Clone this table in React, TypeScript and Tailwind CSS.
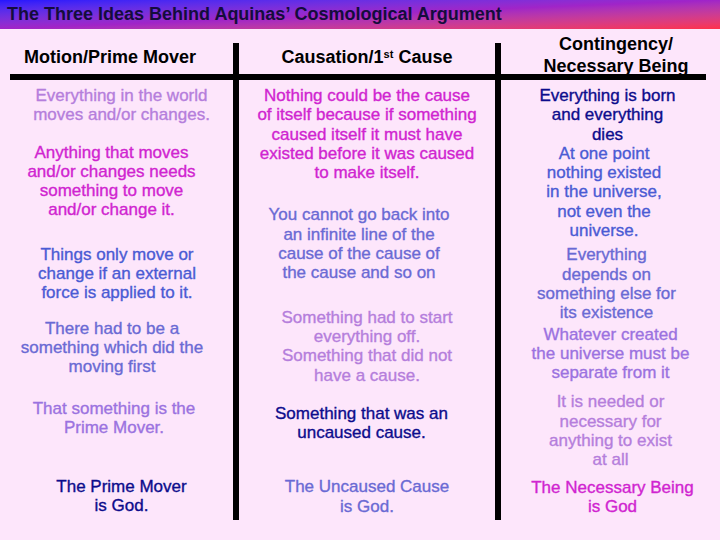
import React from 'react';

type Block = {
  lines: string[];
  color: string;
  space: string;
};

const col1: Block[] = [
  { lines: ['Everything in the world', 'moves and/or changes.'], color: 'text-[#b57edc]', space: 'mt-0' },
  {
    lines: ['Anything that moves', 'and/or changes needs', 'something to move', 'and/or change it.'],
    color: 'text-[#d024d0] pr-[20px]',
    space: 'mt-[18px]',
  },
  {
    lines: ['Things only move or', 'change if an external', 'force is applied to it.'],
    color: 'text-[#4a5bd4] pr-[9px]',
    space: 'mt-[25px]',
  },
  {
    lines: ['There had to be a', 'something which did the', 'moving first'],
    color: 'text-[#6a6ad4] pr-[19px]',
    space: 'mt-[16px]',
  },
  { lines: ['That something is the', 'Prime Mover.'], color: 'text-[#9b72e0] pr-[15px]', space: 'mt-[22px]' },
  { lines: ['The Prime Mover', 'is God.'], color: 'text-[#0c0c8c]', space: 'mt-[40px]' },
];

const col2: Block[] = [
  {
    lines: [
      'Nothing could be the cause',
      'of itself because if something',
      'caused itself it must have',
      'existed before it was caused',
      'to make itself.',
    ],
    color: 'text-[#d024d0]',
    space: 'mt-0',
  },
  {
    lines: ['You cannot go back into', 'an infinite line of the', 'cause of the cause of', 'the cause and so on'],
    color: 'text-[#6a6ad4] pr-[16px]',
    space: 'mt-[23px]',
  },
  {
    lines: ['Something had to start', 'everything off.', 'Something that did not', 'have a cause.'],
    color: 'text-[#b57edc]',
    space: 'mt-[25px]',
  },
  {
    lines: ['Something that was an', 'uncaused cause.'],
    color: 'text-[#0c0c8c] pr-[11px]',
    space: 'mt-[19px]',
  },
  { lines: ['The Uncaused Cause', 'is God.'], color: 'text-[#6a6ad4]', space: 'mt-[35px]' },
];

const col3: Block[] = [
  {
    lines: ['Everything is born', 'and everything', 'dies'],
    color: 'text-[#0c0c8c] pr-[6px]',
    space: 'mt-0',
  },
  {
    lines: ['At one point', 'nothing existed', 'in the universe,', 'not even the', 'universe.'],
    color: 'text-[#4a5bd4] pr-[13px]',
    space: 'mt-0',
  },
  {
    lines: ['Everything', 'depends on', 'something else for', 'its existence'],
    color: 'text-[#6a6ad4] pr-[8px]',
    space: 'mt-[5px]',
  },
  {
    lines: ['Whatever created', 'the universe must be', 'separate from it'],
    color: 'text-[#9b72e0]',
    space: 'mt-[2px]',
  },
  {
    lines: ['It is needed or', 'necessary for', 'anything to exist', 'at all'],
    color: 'text-[#b57edc]',
    space: 'mt-[10px]',
  },
  { lines: ['The Necessary Being', 'is God'], color: 'text-[#d024d0] pl-[4px]', space: 'mt-[8px]' },
];

function Blocks({ items }: { items: Block[] }) {
  return (
    <div className="flex flex-col pt-[6px]">
      {items.map((b, i) => (
        <p
          key={i}
          className={`${b.space} ${b.color} text-center text-[17px] leading-[19.3px] whitespace-nowrap [-webkit-text-stroke:0.35px]`}
        >
          {b.lines.map((l, j) => (
            <React.Fragment key={j}>
              {j > 0 && <br />}
              {l}
            </React.Fragment>
          ))}
        </p>
      ))}
    </div>
  );
}

function Divider() {
  return <div className="w-[6px] mt-[14px] h-[477px] bg-black shrink-0" />;
}

export default function App() {
  return (
    <div className="w-[720px] h-[540px] bg-[#fde6fb] overflow-hidden font-['Liberation_Sans',Arial,sans-serif]">
      <div className="h-[29px] flex items-center pl-[7px] pb-[2px] bg-gradient-to-br from-[#2414ff] via-[#a024c8] to-[#ff3048]">
        <h1 className="text-[18px] font-bold leading-none text-[#140c3c] whitespace-nowrap">
          The Three Ideas Behind Aquinas’ Cosmological Argument
        </h1>
      </div>

      <div className="flex pl-[10px]">
        <div className="w-[223px] shrink-0">
          <div className="h-[45px] flex items-end justify-center pb-[6px] pr-[23px]">
            <h2 className="text-[18px] font-bold leading-[22px] text-black">Motion/Prime Mover</h2>
          </div>
          <div className="h-[6px] bg-black" />
          <Blocks items={col1} />
        </div>

        <Divider />

        <div className="w-[256px] shrink-0">
          <div className="h-[45px] flex items-end justify-center pb-[6px]">
            <h2 className="text-[18px] font-bold leading-[22px] text-black">
              Causation/1<sup className="text-[11px]">st</sup> Cause
            </h2>
          </div>
          <div className="h-[6px] bg-black" />
          <Blocks items={col2} />
        </div>

        <Divider />

        <div className="w-[219px] shrink-0">
          <div className="h-[45px] flex items-end justify-center pl-[11px]">
            <h2 className="text-[18px] font-bold leading-[22px] text-black text-center -mb-[3px]">
              Contingency/
              <br />
              Necessary Being
            </h2>
          </div>
          <div className="h-[6px] w-[205px] bg-black" />
          <Blocks items={col3} />
        </div>
      </div>
    </div>
  );
}
